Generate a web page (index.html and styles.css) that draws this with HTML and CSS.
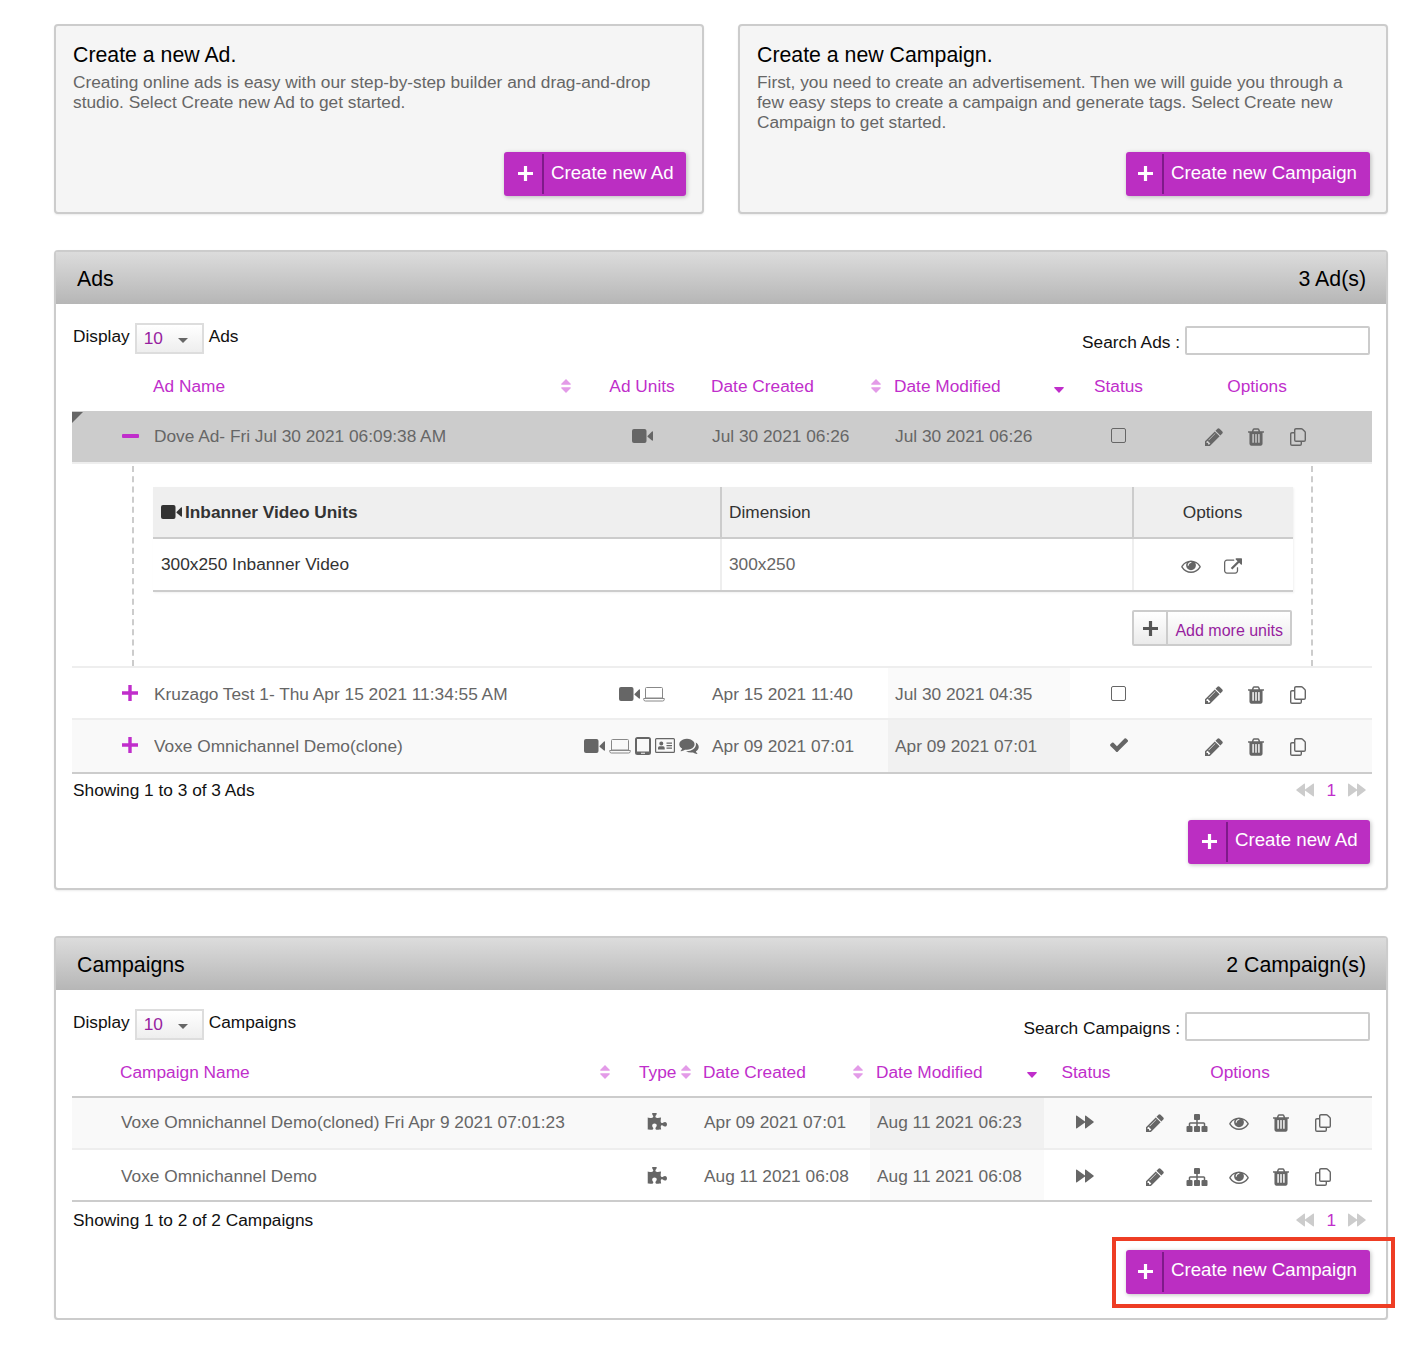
FILE: index.html
```html
<!DOCTYPE html>
<html lang="en">
<head>
<meta charset="utf-8">
<title>Ads and Campaigns</title>
<link rel="stylesheet" href="styles.css">
</head>
<body>
<svg class="defs" width="0" height="0" aria-hidden="true">
  <symbol id="i-video" viewBox="0 0 21 14"><rect x="0" y="0" width="14.500" height="14" rx="2"/><path d="M15.500 7 20 2.500q1-.5 1 .5v8q0 1-1 .5L15.500 7.800z"/></symbol>
  <symbol id="i-laptop" viewBox="0 0 22 16"><path d="M3.500 1.500h15q1 0 1 1v9.500h-17V2.500q0-1 1-1zM.7 12.500h20.600v.8q0 1.700-1.700 1.700H2.400q-1.700 0-1.700-1.700z" fill="none" stroke="currentColor" stroke-width="1"/></symbol>
  <symbol id="i-tablet" viewBox="0 0 16 18"><path d="M2.500 0h11Q16 0 16 2.500v13q0 2.500-2.500 2.500h-11Q0 18 0 15.500v-13Q0 0 2.500 0zM2 2v12.500h12V2zm4 13.700v1h4v-1z" fill-rule="evenodd"/></symbol>
  <symbol id="i-card" viewBox="0 0 20 15"><path d="M1.500 0h17Q20 0 20 1.500v12q0 1.500-1.500 1.500h-17Q0 15 0 13.500v-12Q0 0 1.500 0zm0 1.200q-.3 0-.3.300v12q0 .3.300.3h17q.3 0 .3-.3v-12q0-.3-.3-.3zM6.300 3.500a2 2 0 1 1 0 4 2 2 0 0 1 0-4zM3 11.500V10q0-1.700 1.500-1.700h3.600Q9.700 8.300 9.700 10v1.500zM11.500 4.500H17v1.200h-5.500zM11.500 7H17v1.200h-5.500zM11.500 9.500H17v1.200h-5.500z" fill-rule="evenodd"/></symbol>
  <symbol id="i-comments" viewBox="0 192 1792 1472"><path d="M1408 768q0 139-94 257t-256.500 186.500-353.500 68.500q-86 0-176-16-124 88-278 128-36 9-86 16h-3q-11 0-20.500-8t-11.500-21q-1-3-1-6.500t.5-6.500 2-6l2.500-5 3.500-5.500 4-5 4.500-5 4-4.500q5-6 23-25t26-29.500 22.500-29 25-38.500 20.500-44q-124-72-195-177t-71-224q0-139 94-257t256.500-186.500 353.500-68.500 353.500 68.500 256.500 186.500 94 257zm384 256q0 120-71 224.500t-195 176.500q10 24 20.500 44t25 38.500 22.500 29 26 29.500 23 25q1 1 4 4.500t4.500 5 4 5 3.500 5.500l2.500 5 2 6 .5 6.500-1 6.500q-3 14-13 22t-22 7q-50-7-86-16-154-40-278-128-90 16-176 16-271 0-472-132 58 4 88 4 161 0 309-45t264-129q125-92 192-212t67-254q0-77-23-152 129 71 204 178t75 230z"/></symbol>
  <symbol id="i-pencil" viewBox="128 128 1536 1536"><path d="M491 1536l91-91-235-235-91 91v107h128v128h107zm523-928q0-22-22-22-10 0-17 7l-542 542q-7 7-7 17 0 22 22 22 10 0 17-7l542-542q7-7 7-17zm-54-192l416 416-832 832h-416v-416zm683 96q0 53-37 90l-166 166-416-416 166-165q36-38 90-38 53 0 91 38l235 234q37 39 37 91z"/></symbol>
  <symbol id="i-trash" viewBox="192 128 1408 1536"><path d="M704 1376v-704q0-14-9-23t-23-9h-64q-14 0-23 9t-9 23v704q0 14 9 23t23 9h64q14 0 23-9t9-23zm256 0v-704q0-14-9-23t-23-9h-64q-14 0-23 9t-9 23v704q0 14 9 23t23 9h64q14 0 23-9t9-23zm256 0v-704q0-14-9-23t-23-9h-64q-14 0-23 9t-9 23v704q0 14 9 23t23 9h64q14 0 23-9t9-23zm-544-992h448l-48-117q-7-9-17-11h-317q-10 2-17 11zm928 32v64q0 14-9 23t-23 9h-96v948q0 83-47 143.500t-113 60.500h-832q-66 0-113-58.500t-47-141.500v-952h-96q-14 0-23-9t-9-23v-64q0-14 9-23t23-9h309l70-167q15-37 54-63t79-26h320q40 0 79 26t54 63l70 167h309q14 0 23 9t9 23z"/></symbol>
  <symbol id="i-copy" viewBox="0 0 16 18"><path d="M6 .7h5.200q.8 0 1.300.5l2.300 2.300q.5.500.5 1.300V12q0 1.300-1.300 1.300H6Q4.700 13.300 4.700 12V2Q4.700.7 6 .7zM4.700 4.700H2Q.7 4.700.7 6v10q0 1.300 1.300 1.300h8q1.300 0 1.300-1.300v-2.700" fill="none" stroke="currentColor" stroke-width="1.400"/></symbol>
  <symbol id="i-eye" viewBox="0 256 1792 1280"><path d="M1664 960q-152-236-381-353 61 104 61 225 0 185-131.500 316.500t-316.500 131.500-316.500-131.500-131.500-316.500q0-121 61-225-229 117-381 353 133 205 333.500 326.500t434.500 121.500 434.500-121.500 333.500-326.500zm-720-384q0-20-14-34t-34-14q-125 0-214.500 89.500t-89.500 214.500q0 20 14 34t34 14 34-14 14-34q0-86 61-147t147-61q20 0 34-14t14-34zm848 384q0 34-20 69-140 230-376.500 368.500t-499.500 138.500-499.500-139-376.500-368q-20-35-20-69t20-69q140-229 376.500-368t499.500-139 499.500 139 376.500 368q20 35 20 69z"/></symbol>
  <symbol id="i-external" viewBox="0 0 1792 1536"><path d="M1408 928v320q0 119-84.500 203.500t-203.500 84.500h-832q-119 0-203.500-84.500t-84.500-203.500v-832q0-119 84.500-203.500t203.500-84.500h704q14 0 23 9t9 23v64q0 14-9 23t-23 9h-704q-66 0-113 47t-47 113v832q0 66 47 113t113 47h832q66 0 113-47t47-113v-320q0-14 9-23t23-9h64q14 0 23 9t9 23zm384-864v512q0 26-19 45t-45 19-45-19l-176-176-652 652q-10 10-23 10t-23-10l-114-114q-10-10-10-23t10-23l652-652-176-176q-19-19-19-45t19-45 45-19h512q26 0 45 19t19 45z"/></symbol>
  <symbol id="i-sitemap" viewBox="0 128 1792 1536"><path d="M1792 1248v320q0 40-28 68t-68 28h-320q-40 0-68-28t-28-68v-320q0-40 28-68t68-28h96v-192h-512v192h96q40 0 68 28t28 68v320q0 40-28 68t-68 28h-320q-40 0-68-28t-28-68v-320q0-40 28-68t68-28h96v-192h-512v192h96q40 0 68 28t28 68v320q0 40-28 68t-68 28h-320q-40 0-68-28t-28-68v-320q0-40 28-68t68-28h96v-192q0-52 38-90t90-38h512v-192h-96q-40 0-68-28t-28-68v-320q0-40 28-68t68-28h320q40 0 68 28t28 68v320q0 40-28 68t-68 28h-96v192h512q52 0 90 38t38 90v192h96q40 0 68 28t28 68z"/></symbol>
  <symbol id="i-puzzle" viewBox="0 128 1728 1536"><path d="M1728 1098q0 81-44.500 135t-123.500 54q-41 0-77.500-17.500t-59-38-56.500-38-71-17.500q-110 0-110 124 0 39 16 115t15 115v5q-22 0-33 1-34 3-97.500 11.500t-115.500 13.500-98 5q-61 0-103-26.500t-42-83.500q0-37 17.500-71t38-56.500 38-59 17.500-77.500q0-79-54-123.500t-135-44.500q-84 0-143 45.500t-59 127.500q0 43 15 83t33.500 64.500 33.500 53 15 50.500q0 45-46 89-37 35-117 35-95 0-245-24-9-2-27.500-4t-27.500-4l-13-2q-2 0-4-1-2 0-2-1v-1024q2 1 17.500 3.500t34 5 21.500 3.500q150 24 245 24 80 0 117-35 46-44 46-89 0-22-15-50.500t-33.500-53-33.500-64.500-15-83q0-82 59-127.500t144-45.500q80 0 134 44.500t54 123.500q0 41-17.500 77.500t-38 59-38 56.500-17.500 71q0 57 42 83.500t103 26.500q64 0 180-15t163-17v2q-1 2-3.500 17.500t-5 34-3.500 21.500q-24 150-24 245 0 80 35 117 44 46 89 46 22 0 50.500-15t53-33.500 64.500-33.500 83-15q82 0 127.500 59t45.500 143z"/></symbol>
  <symbol id="i-check" viewBox="113 320 1558 1200"><path d="M1671 566q0 40-28 68l-724 724-136 136q-28 28-68 28t-68-28l-136-136-362-362q-28-28-28-68t28-68l136-136q28-28 68-28t68 28l294 295 656-657q28-28 68-28t68 28l136 136q28 28 28 68z"/></symbol>
  <symbol id="i-forward" viewBox="0 0 18 14"><path d="M0 1.200Q0 0 1 .7l8 5.800q.6.500 0 1l-8 5.800q-1 .7-1-.5zM9 1.200Q9 0 10 .7l7.500 5.800q.6.500 0 1L10 13.300q-1 .7-1-.5z"/></symbol>
  <symbol id="i-sort" viewBox="0 0 10 14"><path d="M5 0l4.700 4.800q.6.900-.5.900H.8q-1.100 0-.5-.9zM5 14L.3 9.200q-.6-.9.5-.9h8.400q1.100 0 .5.900z"/></symbol>
  <symbol id="i-sortdown" viewBox="0 0 10 6"><path d="M.8 0h8.400q1.100 0 .5.900L5 6 .3.900Q-.3 0 .8 0z"/></symbol>
  <symbol id="i-plus" viewBox="0 0 16 16"><path d="M6.300 0h3.400v6.300H16v3.400H9.700V16H6.300V9.700H0V6.300h6.300z"/></symbol>
</svg>

<main class="page">
  <section class="intro">
    <article class="card">
      <h2 class="card-title">Create a new Ad.</h2>
      <p class="card-text">Creating online ads is easy with our step-by-step builder and drag-and-drop studio. Select Create new Ad to get started.</p>
      <a class="btn btn-ad"><span class="btn-plus"><svg class="plus-ic"><use href="#i-plus"/></svg></span><span class="btn-label">Create new Ad</span></a>
    </article>
    <article class="card">
      <h2 class="card-title">Create a new Campaign.</h2>
      <p class="card-text">First, you need to create an advertisement. Then we will guide you through a few easy steps to create a campaign and generate tags. Select Create new Campaign to get started.</p>
      <a class="btn btn-camp"><span class="btn-plus"><svg class="plus-ic"><use href="#i-plus"/></svg></span><span class="btn-label">Create new Campaign</span></a>
    </article>
  </section>

  <section class="panel panel-ads">
    <header class="panel-head"><h2 class="panel-title">Ads</h2><span class="panel-count">3 Ad(s)</span></header>
    <div class="panel-body">
      <div class="controls">
        <div class="display"><span class="display-label">Display</span><span class="select"><span class="select-val">10</span><i class="select-caret"></i></span><span class="display-label">Ads</span></div>
        <label class="search"><span class="search-label">Search Ads :</span><span class="search-input"></span></label>
      </div>
      <table class="grid grid-ads">
        <colgroup><col class="a1"><col class="a2"><col class="a3"><col class="a4"><col class="a5"><col class="a6"><col class="a7"></colgroup>
        <thead>
          <tr>
            <th colspan="2" class="h-name"><div class="th-flex"><span>Ad Name</span><svg class="sort"><use href="#i-sort"/></svg></div></th>
            <th class="h-center">Ad Units</th>
            <th class="h-date"><div class="th-flex"><span>Date Created</span><svg class="sort"><use href="#i-sort"/></svg></div></th>
            <th class="h-date h-mod"><div class="th-flex"><span>Date Modified</span><svg class="sortdown"><use href="#i-sortdown"/></svg></div></th>
            <th class="h-center">Status</th>
            <th class="h-center h-opt-ads">Options</th>
          </tr>
        </thead>
        <tbody>
          <tr class="row row-open">
            <td class="toggle"><i class="corner"></i><span class="minus"></span></td>
            <td class="name">Dove Ad- Fri Jul 30 2021 06:09:38 AM</td>
            <td><div class="units"><svg class="i-video"><use href="#i-video"/></svg></div></td>
            <td class="date">Jul 30 2021 06:26</td>
            <td class="date date-mod">Jul 30 2021 06:26</td>
            <td class="cen"><span class="box"></span></td>
            <td><div class="opts opts-ads"><span class="ic"><svg class="pencil"><use href="#i-pencil"/></svg></span><span class="ic"><svg class="trash"><use href="#i-trash"/></svg></span><span class="ic"><svg class="copy"><use href="#i-copy"/></svg></span></div></td>
          </tr>
          <tr class="row-detail">
            <td colspan="7">
              <div class="detail">
                <table class="sub">
                  <colgroup><col class="s1"><col class="s2"><col class="s3"></colgroup>
                  <thead><tr><th class="sub-main"><svg class="i-video-dark"><use href="#i-video"/></svg>Inbanner Video Units</th><th>Dimension</th><th class="sub-opt">Options</th></tr></thead>
                  <tbody><tr><td>300x250 Inbanner Video</td><td class="dim">300x250</td><td><div class="sub-icons"><span class="ic"><svg class="eye"><use href="#i-eye"/></svg></span><span class="ic"><svg class="external"><use href="#i-external"/></svg></span></div></td></tr></tbody>
                </table>
                <div class="more-wrap"><a class="more"><span class="more-plus"><svg class="more-ic"><use href="#i-plus"/></svg></span><span class="more-label">Add more units</span></a></div>
              </div>
            </td>
          </tr>
          <tr class="row row-plain">
            <td class="toggle"><svg class="toggle-plus"><use href="#i-plus"/></svg></td>
            <td class="name">Kruzago Test 1- Thu Apr 15 2021 11:34:55 AM</td>
            <td><div class="units"><svg class="i-video"><use href="#i-video"/></svg><svg class="i-laptop"><use href="#i-laptop"/></svg></div></td>
            <td class="date">Apr 15 2021 11:40</td>
            <td class="date date-mod shade">Jul 30 2021 04:35</td>
            <td class="cen"><span class="box box-white"></span></td>
            <td><div class="opts opts-ads"><span class="ic"><svg class="pencil"><use href="#i-pencil"/></svg></span><span class="ic"><svg class="trash"><use href="#i-trash"/></svg></span><span class="ic"><svg class="copy"><use href="#i-copy"/></svg></span></div></td>
          </tr>
          <tr class="row row-alt row-last">
            <td class="toggle"><svg class="toggle-plus"><use href="#i-plus"/></svg></td>
            <td class="name">Voxe Omnichannel Demo(clone)</td>
            <td><div class="units units-wide"><svg class="i-video"><use href="#i-video"/></svg><svg class="i-laptop"><use href="#i-laptop"/></svg><svg class="i-tablet"><use href="#i-tablet"/></svg><svg class="i-card"><use href="#i-card"/></svg><svg class="i-comments"><use href="#i-comments"/></svg></div></td>
            <td class="date">Apr 09 2021 07:01</td>
            <td class="date date-mod shade">Apr 09 2021 07:01</td>
            <td class="cen"><svg class="check"><use href="#i-check"/></svg></td>
            <td><div class="opts opts-ads"><span class="ic"><svg class="pencil"><use href="#i-pencil"/></svg></span><span class="ic"><svg class="trash"><use href="#i-trash"/></svg></span><span class="ic"><svg class="copy"><use href="#i-copy"/></svg></span></div></td>
          </tr>
        </tbody>
      </table>
      <div class="foot foot-ads">
        <span>Showing 1 to 3 of 3 Ads</span>
        <span class="pager"><svg class="pg pg-prev"><use href="#i-forward"/></svg><span class="pg-num">1</span><svg class="pg"><use href="#i-forward"/></svg></span>
      </div>
      <div class="actions actions-ads"><a class="btn btn-ad"><span class="btn-plus"><svg class="plus-ic"><use href="#i-plus"/></svg></span><span class="btn-label">Create new Ad</span></a></div>
    </div>
  </section>

  <section class="panel panel-camps">
    <header class="panel-head"><h2 class="panel-title">Campaigns</h2><span class="panel-count">2 Campaign(s)</span></header>
    <div class="panel-body">
      <div class="controls">
        <div class="display"><span class="display-label">Display</span><span class="select"><span class="select-val">10</span><i class="select-caret"></i></span><span class="display-label">Campaigns</span></div>
        <label class="search"><span class="search-label">Search Campaigns :</span><span class="search-input"></span></label>
      </div>
      <table class="grid grid-camps">
        <colgroup><col class="c1"><col class="c2"><col class="c3"><col class="c4"><col class="c5"><col class="c6"></colgroup>
        <thead>
          <tr>
            <th class="h-camp"><div class="th-flex"><span>Campaign Name</span><svg class="sort"><use href="#i-sort"/></svg></div></th>
            <th class="h-type"><div class="th-flex"><span>Type</span><svg class="sort"><use href="#i-sort"/></svg></div></th>
            <th class="h-date"><div class="th-flex"><span>Date Created</span><svg class="sort"><use href="#i-sort"/></svg></div></th>
            <th class="h-date h-mod"><div class="th-flex"><span>Date Modified</span><svg class="sortdown"><use href="#i-sortdown"/></svg></div></th>
            <th class="h-center h-status-camps">Status</th>
            <th class="h-center h-opt-camps">Options</th>
          </tr>
        </thead>
        <tbody>
          <tr class="row row-alt">
            <td class="name-camp">Voxe Omnichannel Demo(cloned) Fri Apr 9 2021 07:01:23</td>
            <td class="type"><svg class="puzzle"><use href="#i-puzzle"/></svg></td>
            <td class="date">Apr 09 2021 07:01</td>
            <td class="date date-mod shade">Aug 11 2021 06:23</td>
            <td class="cen"><svg class="fwd"><use href="#i-forward"/></svg></td>
            <td><div class="opts opts-camps"><span class="ic"><svg class="pencil"><use href="#i-pencil"/></svg></span><span class="ic"><svg class="sitemap"><use href="#i-sitemap"/></svg></span><span class="ic"><svg class="eye"><use href="#i-eye"/></svg></span><span class="ic"><svg class="trash"><use href="#i-trash"/></svg></span><span class="ic"><svg class="copy"><use href="#i-copy"/></svg></span></div></td>
          </tr>
          <tr class="row row-plain row-last">
            <td class="name-camp">Voxe Omnichannel Demo</td>
            <td class="type"><svg class="puzzle"><use href="#i-puzzle"/></svg></td>
            <td class="date">Aug 11 2021 06:08</td>
            <td class="date date-mod shade">Aug 11 2021 06:08</td>
            <td class="cen"><svg class="fwd"><use href="#i-forward"/></svg></td>
            <td><div class="opts opts-camps"><span class="ic"><svg class="pencil"><use href="#i-pencil"/></svg></span><span class="ic"><svg class="sitemap"><use href="#i-sitemap"/></svg></span><span class="ic"><svg class="eye"><use href="#i-eye"/></svg></span><span class="ic"><svg class="trash"><use href="#i-trash"/></svg></span><span class="ic"><svg class="copy"><use href="#i-copy"/></svg></span></div></td>
          </tr>
        </tbody>
      </table>
      <div class="foot foot-camps">
        <span>Showing 1 to 2 of 2 Campaigns</span>
        <span class="pager"><svg class="pg pg-prev"><use href="#i-forward"/></svg><span class="pg-num">1</span><svg class="pg"><use href="#i-forward"/></svg></span>
      </div>
      <div class="actions actions-camps"><a class="btn btn-camp btn-marked"><span class="btn-plus"><svg class="plus-ic"><use href="#i-plus"/></svg></span><span class="btn-label">Create new Campaign</span><span class="highlight"></span></a></div>
    </div>
  </section>
</main>
</body>
</html>
```

FILE: styles.css
```css
* { box-sizing: border-box; }
html, body { margin: 0; padding: 0; background: #fff; }
body { font-family: "Liberation Sans", Arial, sans-serif; font-size: 17.300px; line-height: 20px; color: #111; }
.defs { position: absolute; }
svg { display: block; fill: currentColor; flex: none; }

.page { width: 1388px; padding: 24px 0 0 54px; }

/* intro cards */
.intro { display: grid; grid-template-columns: 650px 650px; gap: 34px; }
.card { height: 190px; padding: 16px 16px 16px 17px; background: #f5f5f5; border: 2px solid #ccc; border-radius: 4px; box-shadow: 0 1px 2px rgba(0,0,0,.08); display: flex; flex-direction: column; }
.card-title { margin: 0; font-size: 21.300px; font-weight: 400; line-height: 26px; color: #000; }
.card-text { margin: 4px 0 0; color: #666; }
.card .btn { margin-top: auto; align-self: flex-end; }

/* buttons */
.btn { display: flex; height: 44px; background: #bb2ec2; color: #fff; border-radius: 3px; box-shadow: 1px 1px 4px rgba(0,0,0,.25); font-size: 18.700px; align-items: center; }
.btn-ad { width: 182px; }
.btn-camp { width: 244px; }
.btn-plus { width: 40px; height: 40px; padding: 0 0 2px 4px; display: flex; align-items: center; justify-content: center; border-right: 2px solid #7f1a8a; }
.btn-camp .btn-plus { width: 38px; padding-left: 3px; }
.plus-ic { width: 15px; height: 15px; }
.btn-label { padding: 0 0 3px 7px; white-space: nowrap; }
.actions .btn-label { padding-bottom: 5px; }
.btn-marked { position: relative; }
.highlight { position: absolute; left: -14px; right: -25px; top: -13px; bottom: -14px; border: 4px solid #ee3d24; }

/* panels */
.panel { border: 2px solid #ccc; border-radius: 4px; background: #fff; box-shadow: 0 1px 2px rgba(0,0,0,.08); }
.panel-ads { margin-top: 36px; height: 640px; }
.panel-camps { margin-top: 46px; height: 384px; }
.panel-head { height: 52px; padding: 2px 20px 0 21px; display: flex; align-items: center; justify-content: space-between; background: linear-gradient(#dcdcdc, #b6b6b6); color: #000; font-size: 21.300px; }
.panel-title { margin: 0; font-size: inherit; font-weight: 400; }
.panel-body { padding: 0 14px 0 16px; }

.controls { height: 57px; padding: 18px 2px 0 1px; display: flex; justify-content: space-between; }
.display { display: flex; align-items: center; height: 32px; gap: 5px; }
.display-label { padding-bottom: 4px; }
.select { width: 69px; height: 31px; padding-left: 7px; display: flex; align-items: center; gap: 15px; border: 2px solid #ddd; background: linear-gradient(#fff, #eee); color: #971e9f; }
.select-caret { width: 0; height: 0; margin-top: 5px; border: 5px solid transparent; border-top: 5px solid #666; border-bottom: 0; }
.search { display: flex; align-items: center; gap: 5px; height: 30px; margin-top: 3px; }
.search-label { padding-top: 4px; }
.search-input { width: 185px; height: 29px; border: 2px solid #ccc; border-radius: 2px; background: #fff; }

/* tables */
.grid { width: 1300px; border-collapse: collapse; table-layout: fixed; }
.a1 { width: 82px; } .a2 { width: 426px; } .a3 { width: 124px; } .a4 { width: 184px; } .a5 { width: 182px; } .a6 { width: 97px; } .a7 { width: 205px; }
.c1 { width: 546px; } .c2 { width: 78px; } .c3 { width: 174px; } .c4 { width: 174px; } .c5 { width: 82px; } .c6 { width: 246px; }
.grid > thead th { height: 50px; padding: 0; font-weight: 400; color: #c02ecb; text-align: left; }
.grid-camps > thead th { border-bottom: 2px solid #ccc; }
.th-flex { display: flex; align-items: center; justify-content: space-between; }
.grid > thead .h-name { padding: 0 9px 0 81px; }
.grid > thead .h-center { text-align: center; }
.grid > thead .h-date { padding: 0 7px; }
.grid > thead .h-mod { padding-left: 6px; }
.grid-ads > thead .h-mod { padding-right: 6px; }
.grid > thead .h-opt-ads { padding-right: 25px; }
.grid > thead .h-opt-camps { padding-right: 18px; }
.grid > thead .h-status-camps { padding-left: 2px; }
.grid > thead .h-camp { padding: 0 8px 0 48px; }
.grid > thead .h-type { padding: 0 5px 0 21px; }
.sort { width: 10px; height: 14px; color: #e39be8; }
.sortdown { width: 10px; height: 6px; color: #c02ecb; margin-top: 7px; }

.row > td { height: 52px; padding: 0; color: #666; border-bottom: 2px solid #eee; }
.grid-ads .row-open > td { padding-bottom: 2px; }
.grid-ads .row-plain > td { padding-top: 2px; }
.grid-ads .row-alt > td { height: 54px; padding-bottom: 1px; }
.grid-camps .row-alt > td { padding-bottom: 2px; }
.grid-camps .row-plain > td { padding-top: 2px; }
.row-last > td { border-bottom-color: #ccc; }
.row > td.date { padding-left: 8px; white-space: nowrap; }
.row > td.date-mod { padding-left: 7px; }
.row > td.name-camp { padding-left: 49px; }
.row-open > td { background: #ccc; }
.row-alt > td { background: #f9f9f9; }
.row-alt > td.shade { background: #f1f1f1; }
.row-plain > td.shade { background: #fafafa; }
.toggle { position: relative; }
.corner { position: absolute; left: 0; top: 1px; width: 0; height: 0; border-top: 11px solid #666; border-right: 11px solid transparent; }
.minus { display: block; width: 17px; height: 3.500px; margin: 1px 0 0 50px; border-radius: 1px; background: #c02ecb; }
.toggle-plus { width: 16px; height: 16px; margin: -2px 0 0 50px; color: #c02ecb; }
.cen { text-align: center; }
.cen svg { margin-left: auto; margin-right: auto; }
.box { display: block; width: 15px; height: 15px; margin: 0 auto; border: 1px solid #666; border-radius: 2px; }
.box-white { background: #fff; margin-top: -2px; }
.check { width: 18px; height: 14px; margin-top: -2px; }
.units { display: flex; justify-content: center; align-items: center; gap: 3px; }
.units-wide { justify-content: flex-end; gap: 4px; padding-right: 5px; }
.i-video { width: 21px; height: 14px; }
.i-laptop { width: 22px; height: 16px; color: #888; }
.i-tablet { width: 16px; height: 18px; }
.i-card { width: 20px; height: 15px; }
.i-comments { width: 20px; height: 16px; }
.opts { display: flex; justify-content: center; gap: 24px; padding-top: 2px; }
.opts-ads { padding-right: 27px; }
.opts-camps { padding-right: 20px; }
.ic { width: 18px; height: 18px; display: flex; align-items: center; justify-content: center; }
.pencil { width: 18px; height: 18px; }
.trash { width: 16px; height: 18px; }
.copy { width: 16px; height: 18px; }
.eye { width: 20px; height: 14px; }
.external { width: 18px; height: 16px; }
.sitemap { width: 22px; height: 18px; }
.puzzle { width: 20px; height: 18px; margin: 0 auto; }
.fwd { width: 18px; height: 14px; margin-top: -1px; }

/* expanded row */
.row-detail > td { padding: 0; border-bottom: 2px solid #eee; }
.detail { height: 200px; margin: 2px 59px 0 60px; padding: 21px 19px 0 19px; border-left: 2px dashed #ccc; border-right: 2px dashed #ccc; }
.sub { width: 1140px; border-collapse: collapse; table-layout: fixed; color: #333; box-shadow: 1px 1px 2px rgba(0,0,0,.06); }
.s1 { width: 568px; } .s2 { width: 412px; } .s3 { width: 160px; }
.sub th { height: 51px; padding: 0 8px; text-align: left; font-weight: 400; background: #efefef; border-bottom: 2px solid #ccc; border-right: 2px solid #ccc; }
.sub th:nth-child(2) { padding-left: 7px; }
.sub th.sub-main { font-weight: 700; }
.sub th.sub-opt { border-right: 0; text-align: center; padding-right: 10px; }
.sub td { height: 53px; padding: 0 8px 2px; border-bottom: 2px solid #ccc; border-right: 2px solid #eee; }
.sub td:last-child { border-right: 0; }
.sub .dim { color: #666; padding-left: 7px; }
.i-video-dark { display: inline-block; width: 21px; height: 14px; margin-right: 3px; vertical-align: -1px; color: #333; }
.sub-icons { display: flex; justify-content: center; gap: 24px; color: #666; padding: 4px 4px 0 0; }
.more-wrap { display: flex; justify-content: flex-end; margin: 18px 0 0 0; }
.more { display: flex; height: 36px; border: 2px solid #ccc; border-radius: 2px; background: linear-gradient(#fff, #ebebeb); font-size: 16px; }
.more-plus { width: 34px; display: flex; align-items: center; justify-content: center; border-right: 2px solid #ccc; color: #555; }
.more-ic { width: 15px; height: 15px; }
.more-label { padding: 6px 7px 0 7px; display: flex; align-items: center; color: #971e9f; white-space: nowrap; }

/* footers */
.foot { height: 36px; padding: 6px 6px 0 1px; display: flex; justify-content: space-between; }
.foot-camps { padding-top: 8px; }
.pager { display: flex; align-items: center; height: 20px; gap: 12px; }
.pg { width: 18px; height: 14px; color: #ccc; }
.pg-prev { transform: scaleX(-1); }
.pg-num { color: #c02ecb; }
.actions { display: flex; justify-content: flex-end; padding: 10px 2px 0 0; }
.actions-camps { padding-top: 12px; }
```
